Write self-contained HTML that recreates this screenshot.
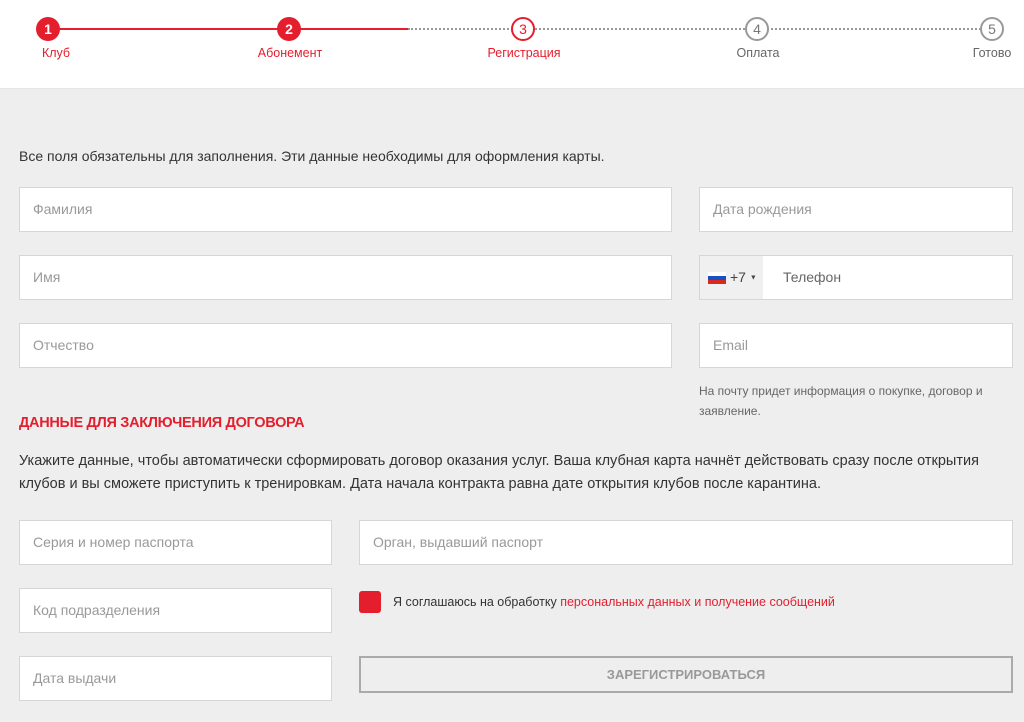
<!DOCTYPE html>
<html><head><meta charset="utf-8"><style>
*{box-sizing:border-box;margin:0;padding:0}
body{width:1024px;height:722px;overflow:hidden;background:#eeeeee;font-family:"Liberation Sans",sans-serif;position:relative}
.hdr{position:absolute;left:0;top:0;width:1024px;height:89px;background:#fff;border-bottom:1px solid #e6e6e6}
.c{position:absolute;width:24px;height:24px;border-radius:50%;top:17px;text-align:center;line-height:24px;font-size:14px;font-weight:bold}
.c.f{background:#e41e2d;color:#fff}
.c.o{border:2px solid #e41e2d;color:#e41e2d;font-weight:normal;line-height:20px;background:#fff}
.c.g{border:2px solid #999;color:#777;font-weight:normal;line-height:20px;background:#fff}
.l{position:absolute;top:46px;font-size:12.5px;transform:translateX(-50%);white-space:nowrap}
.in{position:absolute;background:#fff;border:1px solid #d6d6d6;font-size:14px;color:#999;padding-left:13px;line-height:42px}
.t{position:absolute;font-size:14px;color:#333;white-space:nowrap}
</style></head><body>
<div class="hdr">
<div style="position:absolute;left:48px;top:28px;width:360px;height:2px;background:#e41e2d"></div>
<div style="position:absolute;left:408px;top:28px;width:584px;border-top:2px dotted #999"></div>
<div class="c f" style="left:36px">1</div>
<div class="c f" style="left:277px">2</div>
<div class="c o" style="left:511px">3</div>
<div class="c g" style="left:745px">4</div>
<div class="c g" style="left:980px">5</div>
<div class="l" style="left:56px;color:#e41e2d">Клуб</div>
<div class="l" style="left:290px;color:#e41e2d">Абонемент</div>
<div class="l" style="left:524px;color:#e41e2d">Регистрация</div>
<div class="l" style="left:758px;color:#666">Оплата</div>
<div class="l" style="left:992px;color:#666">Готово</div>
</div>
<div class="t" style="left:19px;top:148px">Все поля обязательны для заполнения. Эти данные необходимы для оформления карты.</div>
<div class="in" style="left:19px;top:187px;width:653px;height:45px">Фамилия</div>
<div class="in" style="left:19px;top:255px;width:653px;height:45px">Имя</div>
<div class="in" style="left:19px;top:323px;width:653px;height:45px">Отчество</div>
<div class="in" style="left:699px;top:187px;width:314px;height:45px">Дата рождения</div>
<div class="in" style="left:699px;top:255px;width:314px;height:45px;padding-left:83px;color:#666">Телефон
<div style="position:absolute;left:0;top:0;width:63px;height:43px;background:#f0f0f0;color:#444;font-size:14px;padding-left:30px">+7 <span style="font-size:7px;vertical-align:middle">▼</span>
<div style="position:absolute;left:8px;top:16px;width:18px;height:12px;background:linear-gradient(#fff 0 33%,#1c4fc0 33% 66%,#d52b1e 66%)"></div></div></div>
<div class="in" style="left:699px;top:323px;width:314px;height:45px">Email</div>
<div class="t" style="left:699px;top:381px;font-size:12px;color:#666;line-height:20px;width:315px;white-space:normal">На почту придет информация о покупке, договор и заявление.</div>
<div class="t" style="left:19px;top:415px;font-size:14.5px;color:#e41e2d;font-weight:bold;letter-spacing:-0.3px">ДАННЫЕ ДЛЯ ЗАКЛЮЧЕНИЯ ДОГОВОРА</div>
<div class="t" style="left:19px;top:450px;font-size:14.5px;line-height:23px;width:990px;white-space:normal">Укажите данные, чтобы автоматически сформировать договор оказания услуг. Ваша клубная карта начнёт действовать сразу после открытия клубов и вы сможете приступить к тренировкам. Дата начала контракта равна дате открытия клубов после карантина.</div>
<div class="in" style="left:19px;top:520px;width:313px;height:45px">Серия и номер паспорта</div>
<div class="in" style="left:19px;top:588px;width:313px;height:45px">Код подразделения</div>
<div class="in" style="left:19px;top:656px;width:313px;height:45px">Дата выдачи</div>
<div class="in" style="left:359px;top:520px;width:654px;height:45px">Орган, выдавший паспорт</div>
<div style="position:absolute;left:359px;top:591px;width:22px;height:22px;background:#e41e2d;border-radius:3px"></div>
<div class="t" style="left:393px;top:595px;font-size:12.5px">Я соглашаюсь на обработку <span style="color:#e41e2d">персональных данных и получение сообщений</span></div>
<div style="position:absolute;left:359px;top:656px;width:654px;height:37px;border:2px solid #aaa;text-align:center;line-height:33px;font-size:13px;font-weight:bold;color:#999">ЗАРЕГИСТРИРОВАТЬСЯ</div>
</body></html>
